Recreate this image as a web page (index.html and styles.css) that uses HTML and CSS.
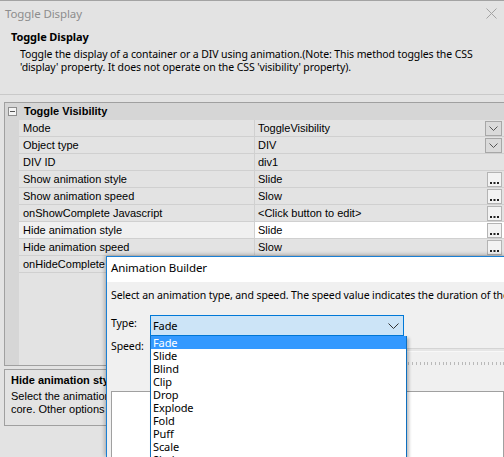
FILE: index.html
```html
<!DOCTYPE html>
<html lang="en">

<head>
    <meta charset="UTF-8">
    <meta name="viewport" content="width=device-width, initial-scale=1.0">
    <title>Toggle Display</title>
    <link rel="stylesheet" href="styles.css">
</head>

<body>
    <div class="window">
        <div class="titlebar">
            <span class="title">Toggle Display</span>
            <svg class="close" width="11" height="11" viewBox="0 0 11 11"><path d="M0.5 0.5 L10.5 10.5 M10.5 0.5 L0.5 10.5" stroke="#a3a3a3" stroke-width="1"/></svg>
        </div>
        <div class="header">
            <div class="header-title">Toggle Display</div>
            <div class="header-desc">Toggle the display of a container or a DIV using animation.(Note: This method toggles the CSS<br>'display' property. It does not operate on the CSS 'visibility' property).</div>
        </div>

        <div class="grid">
            <div class="category">
                <span class="toggle-box"></span>
                <span class="category-name">Toggle Visibility</span>
            </div>
            <div class="row">
                <div class="label">Mode</div>
                <div class="value">ToggleVisibility<span class="btn combo"><svg width="9" height="5" viewBox="0 0 9 5"><path d="M0.5 0.5 L4.5 4.5 L8.5 0.5" fill="none" stroke="#555" stroke-width="1"/></svg></span></div>
            </div>
            <div class="row">
                <div class="label">Object type</div>
                <div class="value">DIV<span class="btn combo"><svg width="9" height="5" viewBox="0 0 9 5"><path d="M0.5 0.5 L4.5 4.5 L8.5 0.5" fill="none" stroke="#555" stroke-width="1"/></svg></span></div>
            </div>
            <div class="row">
                <div class="label">DIV ID</div>
                <div class="value">div1</div>
            </div>
            <div class="row">
                <div class="label">Show animation style</div>
                <div class="value">Slide<span class="btn dots"><svg width="9" height="2" viewBox="0 0 9 2"><path d="M0 0h2v2H0zM3.5 0h2v2h-2zM7 0h2v2H7z" fill="#222"/></svg></span></div>
            </div>
            <div class="row">
                <div class="label">Show animation speed</div>
                <div class="value">Slow<span class="btn dots"><svg width="9" height="2" viewBox="0 0 9 2"><path d="M0 0h2v2H0zM3.5 0h2v2h-2zM7 0h2v2H7z" fill="#222"/></svg></span></div>
            </div>
            <div class="row">
                <div class="label">onShowComplete Javascript</div>
                <div class="value">&lt;Click button to edit&gt;<span class="btn dots"><svg width="9" height="2" viewBox="0 0 9 2"><path d="M0 0h2v2H0zM3.5 0h2v2h-2zM7 0h2v2H7z" fill="#222"/></svg></span></div>
            </div>
            <div class="row selected">
                <div class="label">Hide animation style</div>
                <div class="value">Slide<span class="btn dots"><svg width="9" height="2" viewBox="0 0 9 2"><path d="M0 0h2v2H0zM3.5 0h2v2h-2zM7 0h2v2H7z" fill="#222"/></svg></span></div>
            </div>
            <div class="row">
                <div class="label">Hide animation speed</div>
                <div class="value">Slow<span class="btn dots"><svg width="9" height="2" viewBox="0 0 9 2"><path d="M0 0h2v2H0zM3.5 0h2v2h-2zM7 0h2v2H7z" fill="#222"/></svg></span></div>
            </div>
            <div class="row">
                <div class="label">onHideComplete Javascript</div>
                <div class="value">&lt;Click button to edit&gt;</div>
            </div>
        </div>

        <div class="help">
            <div class="help-title">Hide animation style</div>
            <div class="help-text">Select the animation style used to hide the element. Slide and Fade are part of the jQuery<br>core. Other options require jQuery UI.</div>
        </div>
    </div>

    <!-- animation builder dialog, opened over the property grid -->
    <div class="dialog">
        <div class="dialog-title">Animation Builder</div>
        <div class="dialog-body">
            <div class="dialog-intro">Select an animation type, and speed. The speed value indicates the duration of the animation.</div>
            <div class="field">
                <span class="field-label">Type:</span>
                <div class="select">
                    <span>Fade</span>
                    <svg width="11" height="6" viewBox="0 0 11 6"><path d="M0.5 0.5 L5.5 5.5 L10.5 0.5" fill="none" stroke="#333" stroke-width="1"/></svg>
                </div>
            </div>
            <div class="field speed">
                <span class="field-label">Speed:</span>
                <div class="slider">
                    <div class="groove"></div>
                    <div class="ticks"></div>
                </div>
            </div>
            <div class="preview"></div>

            <ul class="listbox">
                <li class="active">Fade</li>
                <li>Slide</li>
                <li>Blind</li>
                <li>Clip</li>
                <li>Drop</li>
                <li>Explode</li>
                <li>Fold</li>
                <li>Puff</li>
                <li>Scale</li>
                <li>Shake</li>
            </ul>
        </div>
    </div>
</body>

</html>
```

FILE: styles.css
```css
body {
    margin: 0;
    width: 504px;
    height: 457px;
    overflow: hidden;
    position: relative;
    background-color: #e3e3e3;
    font-family: "Liberation Sans", Arial, sans-serif;
    font-size: 11px;
    color: #000;
}

.window {
    border-top: 1px solid #a3a3a3;
    height: 456px;
}

/* window caption */
.titlebar {
    height: 24px;
    display: flex;
    align-items: center;
    justify-content: space-between;
    padding: 0 7px 0 5px;
    font-family: "Noto Sans", sans-serif;
    font-size: 11.5px;
    letter-spacing: -0.1px;
    color: #8d8d8d;
}

.header {
    height: 69px;
    border-bottom: 1px solid #c9c9c9;
    font-family: "Noto Sans", sans-serif;
    font-size: 10.5px;
    letter-spacing: -0.1px;
}

.header-title {
    font-weight: bold;
    font-size: 11px;
    padding: 2px 0 0 11px;
    line-height: 20px;
}

.header-desc {
    padding: 1px 0 0 20px;
    line-height: 13px;
    white-space: nowrap;
}

/* property grid */
.grid {
    margin: 7px 0 0 4px;
    height: 262px;
    border: 1px solid #a0a0a0;
    border-right: none;
    background: linear-gradient(to right, #d6d6d6 14px, #e3e3e3 14px);
}

.category {
    height: 16px;
    line-height: 16px;
    display: flex;
    align-items: center;
    background-color: #d6d6d6;
    border-bottom: 1px solid #d6d6d6;
}

.toggle-box {
    width: 7px;
    height: 7px;
    margin: 0 7px 0 3px;
    border: 1px solid #8d8d8d;
    background: linear-gradient(#555, #555) center / 5px 1px no-repeat, #f4f4f4;
}

.category-name {
    font-weight: bold;
}

.row {
    display: grid;
    grid-template-columns: 236px 1fr;
    margin-left: 14px;
    height: 16px;
    line-height: 16px;
    border-bottom: 1px solid #d0d0d0;
}

.label {
    padding-left: 4px;
    border-right: 1px solid #d0d0d0;
    white-space: nowrap;
    overflow: hidden;
}

.value {
    position: relative;
    padding-left: 3px;
    white-space: nowrap;
}

.row.selected .label {
    background-color: #f0f0f0;
}

.row.selected .value {
    background-color: #fff;
}

.btn {
    position: absolute;
    right: 2px;
    top: 1px;
    width: 15px;
    height: 13px;
    border: 1px solid #a7a7a7;
    display: flex;
    align-items: center;
    justify-content: center;
}

.combo {
    background-color: #dadada;
}

.dots {
    background-color: #f3f3f3;
    border-color: #b4b4b4;
    align-items: flex-end;
    padding-bottom: 2px;
    box-sizing: border-box;
    height: 15px;
}

/* description panel */
.help {
    margin: 3px 0 0 4px;
    height: 55px;
    border: 1px solid #a0a0a0;
    border-right: none;
    padding: 0 0 0 6px;
}

.help-title {
    font-weight: bold;
    line-height: 13px;
    padding-top: 4px;
}

.help-text {
    padding-top: 3px;
    line-height: 13px;
    white-space: nowrap;
}

/* dialog */
.dialog {
    position: absolute;
    left: 106px;
    top: 256px;
    width: 397px;
    height: 200px;
    border: 1px solid #1a7fd4;
    border-right: none;
    border-bottom: none;
    overflow: hidden;
    background-color: #f0f0f0;
    box-shadow: -2px 0 4px rgba(0, 0, 0, 0.15), 0 -2px 4px rgba(0, 0, 0, 0.15);
    font-family: "Noto Sans", sans-serif;
    font-size: 10.5px;
    letter-spacing: -0.1px;
}

.dialog-title {
    height: 25px;
    line-height: 22px;
    padding-left: 4px;
    background-color: #fff;
    font-size: 11.5px;
    letter-spacing: -0.1px;
}

.dialog-body {
    position: relative;
    padding: 0 0 0 4px;
}

.dialog-intro {
    white-space: nowrap;
    line-height: 13px;
    padding-top: 7px;
}

.field {
    display: flex;
    align-items: flex-start;
    margin-top: 13px;
}

.field-label {
    width: 39px;
    line-height: 13px;
    padding-top: 2px;
}

.select {
    width: 246px;
    height: 19px;
    border: 1px solid #0078d7;
    background-color: #cce4f7;
    display: flex;
    align-items: center;
    justify-content: space-between;
    padding: 0 4px 0 2px;
    font-size: 11px;
}

.speed {
    margin-top: 1px;
}

.field.speed .field-label {
    padding-top: 3px;
}

.slider {
    flex: 1;
    height: 40px;
}

.groove {
    margin-top: 11px;
    height: 2px;
    border-top: 1px solid #d4d4d4;
    border-bottom: 1px solid #f8f8f8;
    background-color: #e6e6e6;
}

.ticks {
    margin-top: 10px;
    height: 3px;
    background: repeating-linear-gradient(to right, #b9b9b9 0 1px, transparent 1px 3.8px);
}

.preview {
    margin-top: 14px;
    height: 80px;
    border: 1px solid #a0a0a0;
    background-color: #fff;
}

.listbox {
    position: absolute;
    left: 43px;
    top: 54px;
    width: 255px;
    margin: 0;
    padding: 0;
    list-style: none;
    background-color: #fff;
    border: 1px solid #0e6fbf;
    border-top: none;
    box-shadow: 2px 2px 3px rgba(0, 0, 0, 0.25);
    font-size: 11px;
}

.listbox li {
    height: 13px;
    line-height: 13px;
    padding-left: 2px;
}

.listbox li.active {
    background-color: #3399ff;
    color: #fff;
}
```
